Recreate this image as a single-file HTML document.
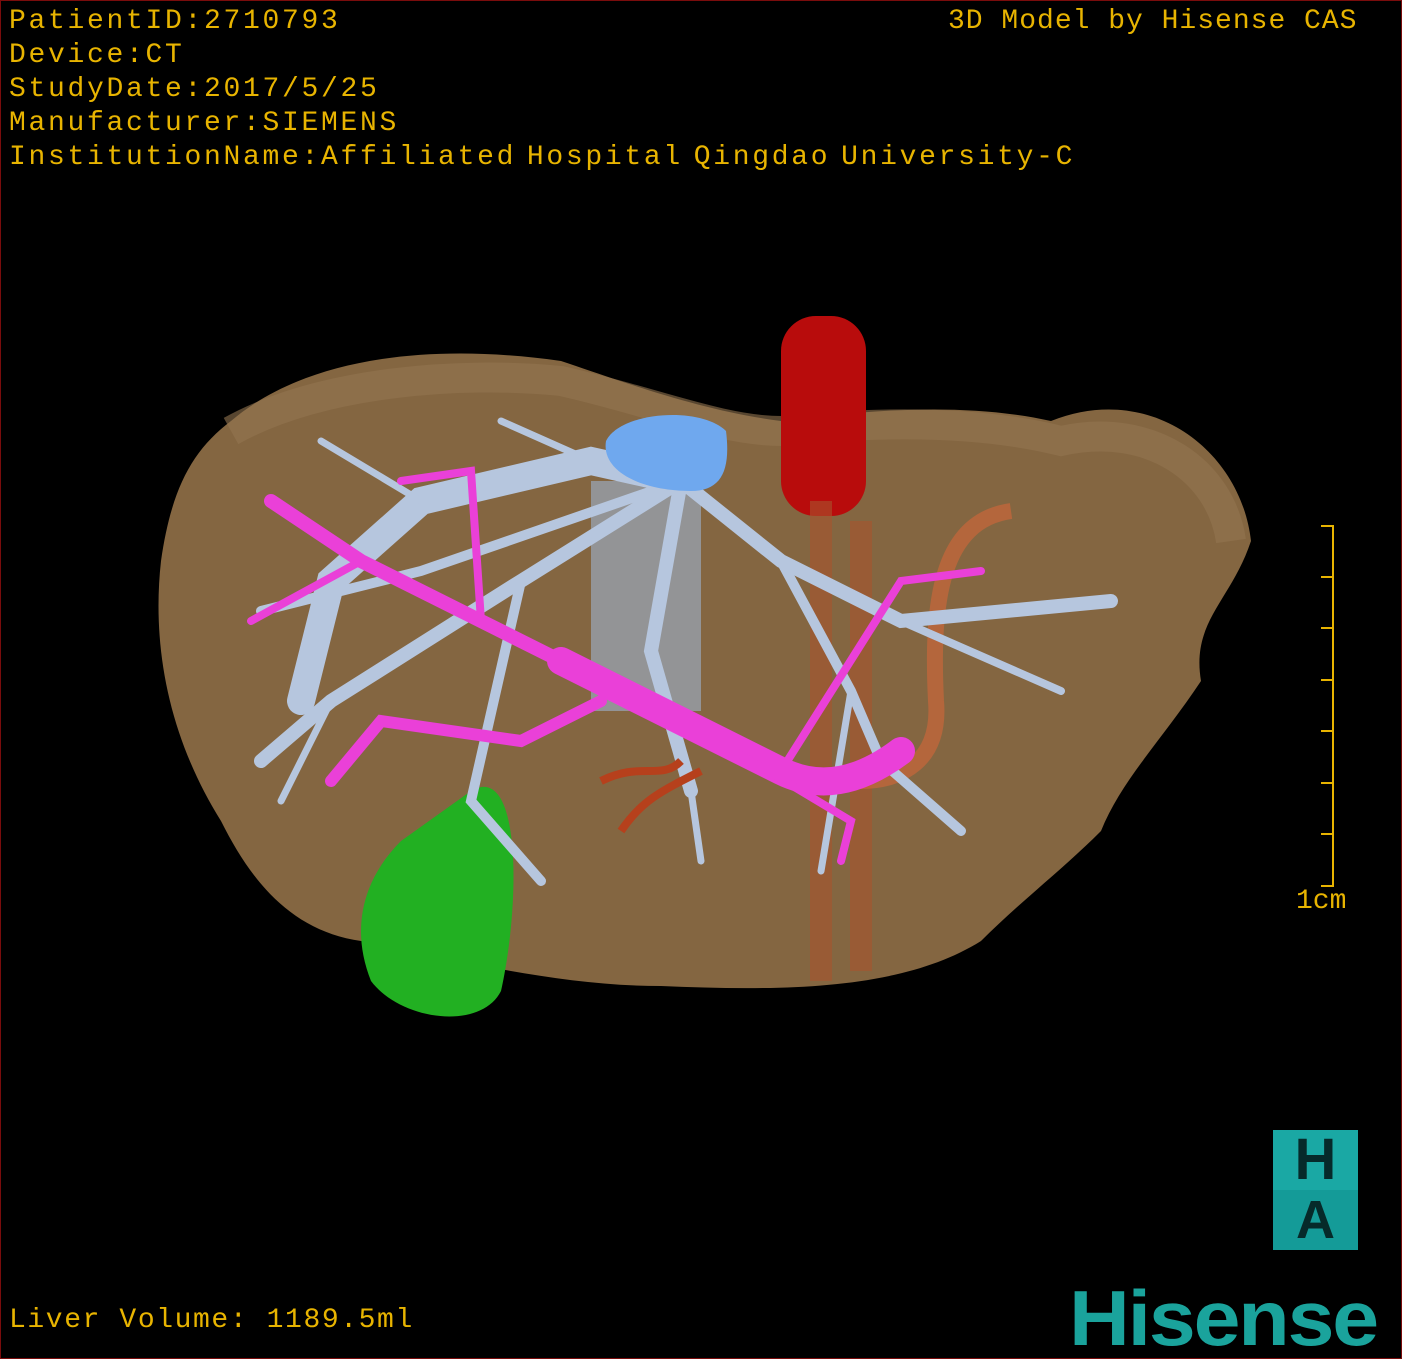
<!DOCTYPE html>
<html><head><style>
body{margin:0;background:#000;}
.w{position:relative;width:1402px;height:1359px;background:#000;overflow:hidden;box-sizing:border-box;border:1px solid #7a0c0c;}
.t{position:absolute;color:#e8b400;font-family:"Liberation Mono",monospace;font-size:28px;letter-spacing:2.7px;line-height:34px;white-space:pre;}
</style></head><body><div class="w">
<svg width="1402" height="1359" style="position:absolute;left:0;top:0">
<path d="M230 420 C300 360 420 340 560 360 C620 380 700 410 780 420 C860 410 960 400 1050 420 C1150 380 1240 450 1250 540 C1230 600 1190 620 1200 680 C1160 740 1120 780 1100 830 C1060 870 1020 900 980 940 C900 990 780 990 660 985 C560 985 460 960 360 940 C290 930 250 880 220 820 C170 740 150 650 160 560 C170 490 190 450 230 420 Z" fill="#846641"/>
<path d="M230 430 C320 380 460 370 560 380 C650 400 720 430 780 430 C880 420 980 420 1060 440 C1150 420 1220 470 1230 540" fill="none" stroke="#927550" stroke-width="30" opacity=".6"/>
<rect x="780" y="315" width="85" height="200" rx="35" fill="#b80c0c"/>
<path d="M820 500 L820 980 M860 520 L860 970" stroke="#a8552e" stroke-width="22" opacity=".6"/>
<path d="M1010 510 C940 520 930 600 935 700 C940 760 900 780 860 780" fill="none" stroke="#c9673a" stroke-width="16" opacity=".7"/>
<path d="M470 790 C520 760 520 900 500 990 C480 1030 400 1020 370 980 C350 930 360 880 400 840 Z" fill="#22b022"/>
<rect x="590" y="480" width="110" height="230" fill="#9aa8bb" opacity=".7"/>
<g stroke="#b6c6de" fill="none" stroke-linecap="round">
<path d="M680 480 L590 460 L420 500 L330 580 L300 700" stroke-width="28"/>
<path d="M680 480 L520 580 L330 700 L260 760" stroke-width="14"/>
<path d="M680 480 L780 560 L900 620 L1110 600" stroke-width="14"/>
<path d="M680 480 L650 650 L690 790" stroke-width="14"/>
<path d="M680 480 L420 570 L260 610" stroke-width="10"/>
<path d="M780 560 L850 690 L880 760 L960 830" stroke-width="10"/>
<path d="M520 580 L470 800 L540 880" stroke-width="10"/>
<path d="M900 620 L1060 690" stroke-width="8"/>
<path d="M420 500 L320 440 M590 460 L500 420 M850 690 L820 870 M690 790 L700 860 M330 700 L280 800" stroke-width="7"/>
</g>
<g stroke="#ea40d8" fill="none" stroke-linecap="round">
<path d="M560 660 C640 700 700 730 780 770 C820 790 860 780 900 750" stroke-width="28"/>
<path d="M560 660 L480 620 L360 560 L270 500" stroke-width="14"/>
<path d="M600 700 L520 740 L380 720 L330 780" stroke-width="12"/>
<path d="M780 770 L900 580 L980 570" stroke-width="8"/>
<path d="M480 620 L470 470 L400 480 M700 730 L850 820 L840 860 M360 560 L250 620" stroke-width="8"/>
</g>
<path d="M605 440 C620 410 700 405 725 430 C730 470 720 490 690 490 C640 490 600 470 605 440 Z" fill="#6fa8ee"/>
<path d="M600 780 C640 760 660 780 680 760 M620 830 C640 800 660 790 700 770" stroke="#b6401c" stroke-width="8" fill="none"/>
<g stroke="#e8b400" stroke-width="2" fill="none"><path d="M1320 525 H1332 V885 H1320 M1320 576 H1332 M1320 627 H1332 M1320 679 H1332 M1320 730 H1332 M1320 782 H1332 M1320 833 H1332"/></g>
</svg>
<div class="t" style="left:8px;top:4px">PatientID:2710793
Device:CT
StudyDate:2017/5/25
Manufacturer:SIEMENS
InstitutionName:Affiliated<span style="letter-spacing:-6px"> </span>Hospital<span style="letter-spacing:-6px"> </span>Qingdao<span style="letter-spacing:-6px"> </span>University-C</div>
<div class="t" style="left:947px;top:4px;letter-spacing:1px">3D Model by Hisense CAS</div>
<div class="t" style="left:1295px;top:884px;letter-spacing:0">1cm</div>
<div class="t" style="left:8px;top:1303px;letter-spacing:1.6px">Liver Volume: 1189.5ml</div>
<div style="position:absolute;left:1272px;top:1129px;width:85px;height:60px;background:#1aa8a4;color:#062a2a;font:bold 58px 'Liberation Sans',sans-serif;text-align:center;line-height:60px">H</div>
<div style="position:absolute;left:1272px;top:1189px;width:85px;height:60px;background:#149b98;color:#062a2a;font:bold 54px 'Liberation Sans',sans-serif;text-align:center;line-height:60px">A</div>
<div style="position:absolute;left:1068px;top:1272px;color:#1aa39c;font:bold 78px 'Liberation Sans',sans-serif;letter-spacing:-2px;line-height:90px;transform:scaleX(1.08);transform-origin:left">Hisense</div>
</div></body></html>
